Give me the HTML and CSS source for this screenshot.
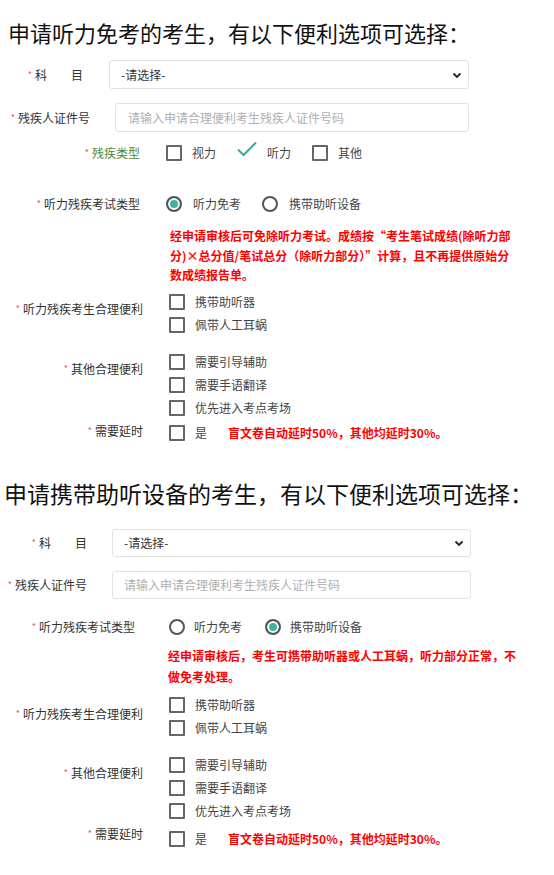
FILE: index.html
```html
<!DOCTYPE html>
<html lang="zh-CN">
<head>
    <meta charset="UTF-8">
    <meta name="viewport" content="width=device-width, initial-scale=1.0">
    <title>合理便利申请</title>
    <link rel="stylesheet" href="styles.css">
</head>
<body>
    <div class="section s1">
        <h2 class="title">申请听力免考的考生，有以下便利选项可选择：</h2>

        <div class="row r-subject">
            <label class="lbl"><span class="req">*</span>科　　目</label>
            <div class="sel-wrap">
                <select class="sel"><option>-请选择-</option></select>
                <svg class="chev" width="10" height="7" viewBox="0 0 10 7"><path d="M1.5 1.5 L5 5 L8.5 1.5" fill="none" stroke="#222" stroke-width="1.8"/></svg>
            </div>
        </div>

        <div class="row r-id">
            <label class="lbl"><span class="req">*</span>残疾人证件号</label>
            <input class="txt" type="text" placeholder="请输入申请合理便利考生残疾人证件号码">
        </div>

        <div class="row r-type">
            <label class="lbl green"><span class="req">*</span>残疾类型</label>
            <div class="opts inline">
                <label class="opt"><input type="checkbox">视力</label>
                <label class="opt"><svg class="tick" width="20" height="16" viewBox="0 0 20 16"><path d="M1 8.5 L6.5 14 L19 1.5" fill="none" stroke="#3aa99b" stroke-width="2"/></svg>听力</label>
                <label class="opt"><input type="checkbox">其他</label>
            </div>
        </div>

        <div class="row r-exam">
            <label class="lbl"><span class="req">*</span>听力残疾考试类型</label>
            <div class="opts inline">
                <label class="opt"><input type="radio" name="exam1" checked>听力免考</label>
                <label class="opt"><input type="radio" name="exam1">携带助听设备</label>
            </div>
        </div>

        <p class="note">经申请审核后可免除听力考试。成绩按“考生笔试成绩(除听力部<br>分)×总分值/笔试总分（除听力部分）”计算，且不再提供原始分<br>数成绩报告单。</p>

        <div class="row r-hear">
            <label class="lbl"><span class="req">*</span>听力残疾考生合理便利</label>
            <div class="opts">
                <label class="opt"><input type="checkbox">携带助听器</label>
                <label class="opt"><input type="checkbox">佩带人工耳蜗</label>
            </div>
        </div>

        <div class="row r-other">
            <label class="lbl"><span class="req">*</span>其他合理便利</label>
            <div class="opts">
                <label class="opt"><input type="checkbox">需要引导辅助</label>
                <label class="opt"><input type="checkbox">需要手语翻译</label>
                <label class="opt"><input type="checkbox">优先进入考点考场</label>
            </div>
        </div>

        <div class="row r-delay">
            <label class="lbl"><span class="req">*</span>需要延时</label>
            <div class="opts inline">
                <label class="opt"><input type="checkbox">是</label>
                <span class="hint">盲文卷自动延时50%，其他均延时30%。</span>
            </div>
        </div>
    </div>

    <div class="section s2">
        <h2 class="title">申请携带助听设备的考生，有以下便利选项可选择：</h2>

        <div class="row r-subject">
            <label class="lbl"><span class="req">*</span>科　　目</label>
            <div class="sel-wrap">
                <select class="sel"><option>-请选择-</option></select>
                <svg class="chev" width="10" height="7" viewBox="0 0 10 7"><path d="M1.5 1.5 L5 5 L8.5 1.5" fill="none" stroke="#222" stroke-width="1.8"/></svg>
            </div>
        </div>

        <div class="row r-id">
            <label class="lbl"><span class="req">*</span>残疾人证件号</label>
            <input class="txt" type="text" placeholder="请输入申请合理便利考生残疾人证件号码">
        </div>

        <div class="row r-exam">
            <label class="lbl"><span class="req">*</span>听力残疾考试类型</label>
            <div class="opts inline">
                <label class="opt"><input type="radio" name="exam2">听力免考</label>
                <label class="opt"><input type="radio" name="exam2" checked>携带助听设备</label>
            </div>
        </div>

        <p class="note">经申请审核后，考生可携带助听器或人工耳蜗，听力部分正常，不<br>做免考处理。</p>

        <div class="row r-hear">
            <label class="lbl"><span class="req">*</span>听力残疾考生合理便利</label>
            <div class="opts">
                <label class="opt"><input type="checkbox">携带助听器</label>
                <label class="opt"><input type="checkbox">佩带人工耳蜗</label>
            </div>
        </div>

        <div class="row r-other">
            <label class="lbl"><span class="req">*</span>其他合理便利</label>
            <div class="opts">
                <label class="opt"><input type="checkbox">需要引导辅助</label>
                <label class="opt"><input type="checkbox">需要手语翻译</label>
                <label class="opt"><input type="checkbox">优先进入考点考场</label>
            </div>
        </div>

        <div class="row r-delay">
            <label class="lbl"><span class="req">*</span>需要延时</label>
            <div class="opts inline">
                <label class="opt"><input type="checkbox">是</label>
                <span class="hint">盲文卷自动延时50%，其他均延时30%。</span>
            </div>
        </div>
    </div>
</body>
</html>
```

FILE: styles.css
```css
body {
    margin: 0;
    font-family: "Noto Sans CJK SC", "Microsoft YaHei", sans-serif;
    font-size: 12px;
    color: #333;
    background: #fff;
}
.title {
    margin: 0;
    font-weight: normal;
    color: #111;
    white-space: nowrap;
}
.row {
    display: flex;
    align-items: flex-start;
}
.lbl {
    flex: none;
    text-align: right;
    line-height: 20px;
    color: #333;
    white-space: nowrap;
}
.lbl.green {
    color: #4b8b3b;
}
.req {
    color: #e55;
    font-size: 9px;
    line-height: 1;
    margin-right: 3px;
    vertical-align: 2px;
}
.sel-wrap {
    position: relative;
}
.sel {
    appearance: none;
    -webkit-appearance: none;
    display: block;
    width: 100%;
    height: 100%;
    margin: 0;
    border: 1px solid #e2e2e2;
    border-radius: 3px;
    background: #fff;
    font-family: inherit;
    font-size: 12px;
    color: #333;
    box-sizing: border-box;
}
.chev {
    position: absolute;
    right: 7px;
    top: 50%;
    margin-top: -3px;
}
.txt {
    display: block;
    margin: 0;
    border: 1px solid #e2e2e2;
    border-radius: 3px;
    font-family: inherit;
    font-size: 12px;
    color: #333;
    box-sizing: border-box;
}
.txt::placeholder {
    color: #b0b0b0;
}
.opts {
    display: flex;
    flex-direction: column;
}
.opts.inline {
    flex-direction: row;
    align-items: center;
    gap: 21px;
}
.opt {
    display: flex;
    align-items: center;
    gap: 10px;
    height: 23px;
    line-height: 20px;
    color: #444;
    white-space: nowrap;
}
.opt input {
    appearance: none;
    -webkit-appearance: none;
    flex: none;
    width: 16px;
    height: 16px;
    margin: 0;
    border: 2px solid #666;
    background: #fff;
    box-sizing: border-box;
}
.opt input[type="checkbox"] {
    border-radius: 1px;
}
.opt input[type="radio"] {
    border-radius: 50%;
    border-color: #555;
}
.opt input[type="radio"]:checked {
    background: #3cb3a4;
    box-shadow: inset 0 0 0 2px #fff;
}
.tick {
    flex: none;
    margin-top: -8px;
}
.note {
    margin: 0;
    color: #f00;
    font-weight: bold;
    white-space: nowrap;
}
.hint {
    color: #f00;
    font-weight: bold;
    line-height: 20px;
    white-space: nowrap;
}

/* section 1 */
.s1 .title {
    margin-top: 16px;
    padding-left: 8px;
    font-size: 22px;
    line-height: 32px;
}
.s1 .r-subject {
    margin-top: 12px;
}
.s1 .r-subject .lbl {
    width: 83px;
    line-height: 29px;
}
.s1 .sel-wrap {
    margin-left: 26px;
    width: 360px;
    height: 29px;
}
.s1 .sel {
    padding-left: 11px;
}
.s1 .r-id {
    margin-top: 14px;
}
.s1 .r-id .lbl {
    width: 90px;
    line-height: 29px;
}
.s1 .txt {
    margin-left: 25px;
    width: 354px;
    height: 29px;
    padding-left: 12px;
}
.s1 .r-type {
    margin-top: 11px;
}
.s1 .r-type .lbl,
.s1 .r-exam .lbl {
    width: 140px;
}
.s1 .r-type .opts,
.s1 .r-exam .opts {
    margin-left: 26px;
    height: 20px;
}
.s1 .r-exam {
    margin-top: 31px;
}
.s1 .r-exam .opt {
    gap: 11px;
}
.s1 .note {
    margin-top: 12px;
    margin-left: 170px;
    line-height: 19.5px;
}
.s1 .r-hear {
    margin-top: 6px;
}
.s1 .r-other {
    margin-top: 14px;
}
.s1 .r-delay {
    margin-top: 1.5px;
}
.s1 .r-hear .lbl,
.s1 .r-other .lbl,
.s1 .r-delay .lbl {
    width: 143px;
    padding-top: 8.5px;
}
.s1 .r-delay .lbl {
    padding-top: 0;
}
.s1 .r-hear .opts,
.s1 .r-other .opts,
.s1 .r-delay .opts {
    margin-left: 26px;
}
.s1 .r-delay .opts {
    margin-top: 0.5px;
}

/* section 2 */
.s2 .title {
    margin-top: 31px;
    padding-left: 4px;
    font-size: 23px;
    line-height: 34px;
}
.s2 .r-subject {
    margin-top: 19px;
}
.s2 .r-subject .lbl,
.s2 .r-id .lbl {
    width: 87px;
    line-height: 28px;
}
.s2 .sel-wrap {
    margin-left: 25px;
    width: 359px;
    height: 28px;
}
.s2 .sel {
    padding-left: 11px;
}
.s2 .r-id {
    margin-top: 14px;
}
.s2 .txt {
    margin-left: 25px;
    width: 359px;
    height: 28px;
    padding-left: 11px;
}
.s2 .r-exam {
    margin-top: 18px;
}
.s2 .r-exam .lbl {
    width: 135px;
}
.s2 .r-exam .opts {
    margin-left: 34px;
    height: 20px;
    gap: 23px;
}
.s2 .r-exam .opt {
    gap: 9px;
}
.s2 .note {
    margin-top: 8.5px;
    margin-left: 168px;
    line-height: 21px;
}
.s2 .r-hear {
    margin-top: 6px;
}
.s2 .r-other {
    margin-top: 14px;
}
.s2 .r-delay {
    margin-top: 1.5px;
}
.s2 .r-hear .lbl,
.s2 .r-other .lbl,
.s2 .r-delay .lbl {
    width: 143px;
}
.s2 .r-hear .lbl {
    padding-top: 10.5px;
}
.s2 .r-other .lbl {
    padding-top: 9.5px;
}
.s2 .r-hear .opts,
.s2 .r-other .opts,
.s2 .r-delay .opts {
    margin-left: 26px;
}
.s2 .r-delay .opts {
    margin-top: 3.5px;
}
```
